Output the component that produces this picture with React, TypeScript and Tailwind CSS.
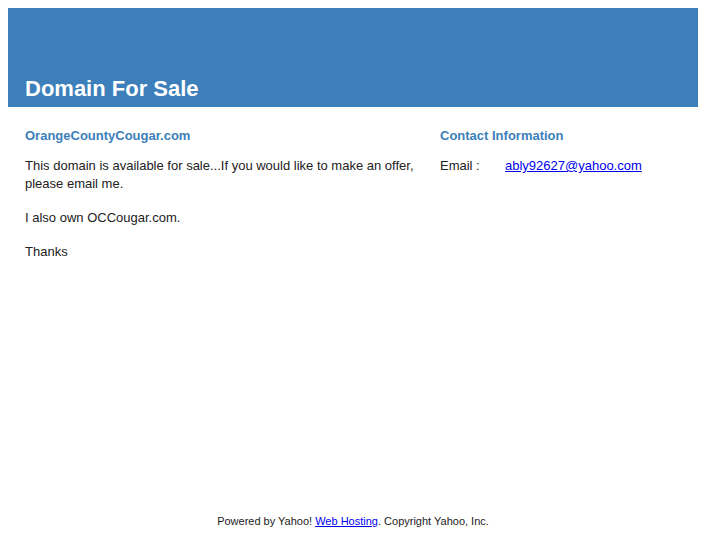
export default function App() {
  return (
    <div className="flex min-h-screen flex-col bg-white p-2 font-['Liberation_Sans',Arial,sans-serif] text-[#222]">
      <div className="w-[690px]">
        <header className="flex h-[99px] items-end bg-[#3c7fba] px-[17px] pb-[5px]">
          <h1 className="text-[22px] font-bold leading-[26px] text-white">Domain For Sale</h1>
        </header>

        <main className="flex px-[17px] pt-[21px]">
          <section className="w-[398px] shrink-0">
            <h2 className="text-[13px] font-bold leading-[16px] text-[#3c7fba]">
              OrangeCountyCougar.com
            </h2>
            <p className="mt-[13px] text-[13px] leading-[18px]">
              This domain is available for sale...If you would like to make an offer, please email me.
            </p>
            <p className="mt-[16px] text-[13px] leading-[18px]">I also own OCCougar.com.</p>
            <p className="mt-[16px] text-[13px] leading-[18px]">Thanks</p>
          </section>

          <section className="ml-[17px]">
            <h2 className="text-[13px] font-bold leading-[16px] text-[#3c7fba]">
              Contact Information
            </h2>
            <div className="mt-[13px] flex text-[13px] leading-[18px]">
              <span className="w-[65px]">Email :</span>
              <a href="#" className="text-[#0000ee] underline">
                ably92627@yahoo.com
              </a>
            </div>
          </section>
        </main>
      </div>

      <footer className="mt-auto w-[690px] pb-[9px] text-center text-[11px] leading-[14px] text-[#222]">
        Powered by Yahoo!{" "}
        <a href="#" className="text-[#0000ee] underline">
          Web Hosting
        </a>
        . Copyright Yahoo, Inc.
      </footer>
    </div>
  );
}
